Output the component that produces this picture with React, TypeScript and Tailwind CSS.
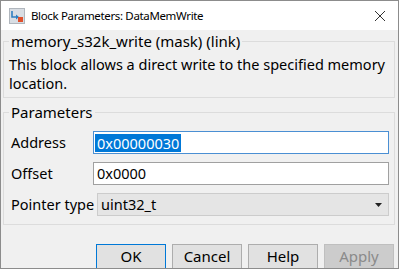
import React from "react";

const font = { fontFamily: '"Noto Sans", "Open Sans", sans-serif' };

function BlockIcon() {
  return (
    <svg width="16" height="16" viewBox="0 0 16 16">
      <rect x="0.5" y="0.5" width="15" height="15" fill="#d8dde3" stroke="#b0b6bd" />
      <path d="M3 3 L3 9 L9 9" fill="none" stroke="#2f7fc1" strokeWidth="1.6" />
      <path d="M7 6.5 L10 9 L7 11.5 Z" fill="#2f7fc1" />
      <rect x="9" y="9" width="5" height="5" fill="#e0502c" />
    </svg>
  );
}

export default function App() {
  return (
    <div
      className="w-[399px] h-[269px] overflow-hidden border border-[#8c8c8c] bg-[#f0f0f0] flex flex-col text-black"
      style={font}
    >
      <div className="h-[29px] shrink-0 bg-white flex items-center pl-[8px] pr-[12px]">
        <BlockIcon />
        <span className="ml-[6px] text-[11.5px] tracking-[-0.35px] leading-none">Block Parameters: DataMemWrite</span>
        <span className="ml-auto">
          <svg width="12" height="12" viewBox="0 0 12 12">
            <path d="M1 1 L11 11 M11 1 L1 11" stroke="#333" strokeWidth="1" />
          </svg>
        </span>
      </div>
      <div className="flex flex-col pl-[2px] pr-[3px]">
        <fieldset className="border border-[#dcdcdc] mt-[1px] pl-[5px] pr-[6px] pb-[4px]">
          <legend className="px-[2px] text-[15px] leading-[20px]">memory_s32k_write (mask) (link)</legend>
          <p className="text-[14.5px] leading-[19px] mt-[4px]">
            This block allows a direct write to the specified memory location.
          </p>
        </fieldset>
        <fieldset className="border border-[#dcdcdc] mt-[4px] pl-[7px] pr-[5px] pb-[8px]">
          <legend className="-ml-[2px] px-[2px] text-[15px] leading-[20px]">Parameters</legend>
          <div className="flex items-center mt-[9px] h-[23px]">
            <span className="w-[82px] text-[14.5px]">Address</span>
            <div className="flex-1 h-[23px] border border-[#4a8fd3] bg-white flex items-center pl-[1px]">
              <span className="bg-[#0078d7] text-white text-[14.5px] leading-[18px] px-[2px]">0x00000030</span>
            </div>
          </div>
          <div className="flex items-center mt-[8px] h-[23px]">
            <span className="w-[82px] text-[14.5px]">Offset</span>
            <div className="flex-1 h-[23px] border border-[#a0a0a0] bg-white flex items-center pl-[3px]">
              <span className="text-[14.5px]">0x0000</span>
            </div>
          </div>
          <div className="flex items-center mt-[8px] h-[23px]">
            <span className="w-[86px] text-[14.5px]">Pointer type</span>
            <div className="flex-1 h-[23px] border border-[#cccccc] bg-[#e5e5e5] flex items-center pl-[3px] pr-[6px]">
              <span className="text-[14.5px]">uint32_t</span>
              <svg className="ml-auto" width="7" height="4" viewBox="0 0 7 4">
                <path d="M0 0 L7 0 L3.5 4 Z" fill="#222" />
              </svg>
            </div>
          </div>
        </fieldset>
        <div className="flex justify-end gap-[6px] mt-[19px] pr-[1px]">
          <button className="w-[70px] h-[25px] bg-[#e1e1e1] border border-[#0078d7] text-[15px]">OK</button>
          <button className="w-[70px] h-[25px] bg-[#e1e1e1] border border-[#adadad] text-[15px]">Cancel</button>
          <button className="w-[70px] h-[25px] bg-[#e1e1e1] border border-[#adadad] text-[15px]">Help</button>
          <button className="w-[70px] h-[25px] bg-[#cccccc] border border-[#bfbfbf] text-[15px] text-[#8a8a8a]">Apply</button>
        </div>
      </div>
    </div>
  );
}
